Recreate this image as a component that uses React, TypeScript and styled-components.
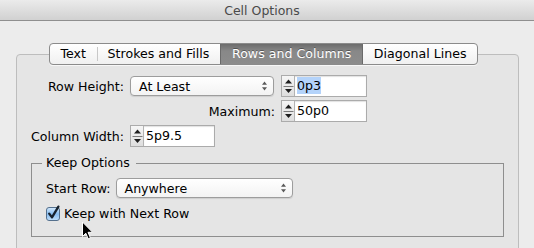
import React from 'react'
import styled, { createGlobalStyle } from 'styled-components'

const GlobalStyle = createGlobalStyle`
  html, body {
    margin: 0;
    padding: 0;
  }
  body {
    background: #ececec;
    font-family: 'DejaVu Sans', 'Liberation Sans', sans-serif;
    font-size: 12.6px;
    color: #000;
  }
`

const Window = styled.div`
  position: relative;
  width: 534px;
  height: 248px;
  overflow: hidden;
  display: flex;
  flex-direction: column;
  background: #ececec;
`

const TitleBar = styled.div`
  flex: none;
  height: 20px;
  display: flex;
  align-items: center;
  justify-content: center;
  padding-right: 10px;
  background: linear-gradient(#ebebeb, #d1d1d1);
  border-bottom: 1px solid #8f8f8f;
  color: #4a4a4a;
  font-size: 12.5px;
`

const Body = styled.div`
  flex: none;
  padding: 22px 15px 0 16px;
`

const TabRow = styled.div`
  position: relative;
  z-index: 1;
  display: flex;
  justify-content: center;
  padding-right: 8px;
  margin-bottom: -11px;
`

const TabGroup = styled.div`
  display: flex;
  height: 20px;
  border: 1px solid #8b8b8b;
  border-radius: 4px;
  overflow: hidden;
  background: linear-gradient(#ffffff, #f0f0f0);
  box-shadow: 0 1px 0 rgba(255, 255, 255, 0.7);
`

const Tab = styled.div<{ $active?: boolean; $divider?: boolean }>`
  position: relative;
  padding: 0 10.8px;
  line-height: 20px;
  white-space: nowrap;
  color: ${(p) => (p.$active ? '#fff' : '#000')};
  background: ${(p) =>
    p.$active ? 'linear-gradient(#6c6c6c, #888 35%, #8c8c8c)' : 'transparent'};
  text-shadow: ${(p) => (p.$active ? '0 -1px 0 rgba(0,0,0,0.35)' : 'none')};
  border-left: ${(p) => (p.$active ? '1px solid #6a6a6a' : 'none')};
  border-right: ${(p) => (p.$active ? '1px solid #6a6a6a' : 'none')};

  &::before {
    content: '';
    display: ${(p) => (p.$divider ? 'block' : 'none')};
    position: absolute;
    left: 0;
    top: 3px;
    bottom: 3px;
    width: 1px;
    background: #c8c8c8;
  }
`

const Pane = styled.div`
  height: 240px;
  border: 1px solid #bdbdbd;
  border-radius: 4px;
  background: #e5e5e5;
  padding: 20px 14px 0 14px;
`

const SizeGrid = styled.div`
  display: grid;
  grid-template-columns: 93px 145px 86px;
  column-gap: 6px;
  row-gap: 3px;
  grid-auto-rows: 22px;
  align-items: center;
`

const Label = styled.div<{ $col?: number }>`
  grid-column: ${(p) => p.$col ?? 1};
  justify-self: end;
  white-space: nowrap;
`

const PopUp = styled.div<{ $width: number }>`
  box-sizing: border-box;
  width: ${(p) => p.$width}px;
  height: 20px;
  display: flex;
  align-items: center;
  padding: 0 5px 0 8px;
  border: 1px solid #9d9d9d;
  border-radius: 4px;
  background: linear-gradient(#ffffff, #f3f3f3);
  box-shadow: 0 1px 1px rgba(0, 0, 0, 0.1);

  svg {
    margin-left: auto;
  }
`

const Stepper = styled.div<{ $width: number }>`
  box-sizing: border-box;
  width: ${(p) => p.$width}px;
  height: 22px;
  display: flex;
  border: 1px solid #ababab;
  background: #fff;
`

const SpinBox = styled.div`
  flex: none;
  width: 12px;
  display: flex;
  align-items: center;
  justify-content: center;
  border-right: 1px solid #b3b3b3;
  background: linear-gradient(#f6f6f6, #dedede);
`

const FieldText = styled.div`
  flex: 1;
  padding-left: 2px;
  line-height: 20px;
  box-shadow: inset 0 1px 1px rgba(0, 0, 0, 0.12);
`

const Selected = styled.span`
  background: #b4d3fa;
  padding: 1px 0;
`

const Group = styled.fieldset`
  margin: 9px 0 0;
  padding: 8px 14px 15px;
  border: 1px solid #8e8e8e;
  min-width: 0;
`

const Legend = styled.legend`
  margin-left: -4px;
  padding: 0 6px 0 4px;
  line-height: 14px;
`

const FormRow = styled.div<{ $gap: number; $top?: number }>`
  display: flex;
  align-items: center;
  gap: ${(p) => p.$gap}px;
  margin-top: ${(p) => p.$top ?? 0}px;
  min-height: 16px;
`

const Pointer = styled.svg`
  position: absolute;
  left: 81px;
  top: 221px;
`

const PopUpArrows = () => (
  <svg width="7" height="12" viewBox="0 0 7 12">
    <path d="M3.5 1.5 L6 4.8 H1 Z M3.5 10.5 L6 7.2 H1 Z" fill="#5a5a5a" />
  </svg>
)

const SpinArrows = () => (
  <svg width="11" height="20" viewBox="0 0 11 20">
    <path d="M5.5 3.5 L9 7.5 H2 Z" fill="#1e1e1e" />
    <path d="M0.5 10.5 H10.5" stroke="#7a7a7a" strokeWidth="1" />
    <path d="M5.5 17 L9 13 H2 Z" fill="#1e1e1e" />
  </svg>
)

const CheckBox = () => (
  <svg width="15" height="16" viewBox="0 0 15 16">
    <defs>
      <linearGradient id="cbFill" x1="0" y1="0" x2="0" y2="1">
        <stop offset="0" stopColor="#d6eafc" />
        <stop offset="0.5" stopColor="#86bcf0" />
        <stop offset="1" stopColor="#c2e0fb" />
      </linearGradient>
    </defs>
    <rect x="0.5" y="2.5" width="13" height="13" rx="2.5" fill="url(#cbFill)" stroke="#55708d" />
    <path
      d="M3.2 8.6 L6 12.4 L12.4 1.6"
      fill="none"
      stroke="#17222e"
      strokeWidth="2.3"
      strokeLinecap="round"
      strokeLinejoin="round"
    />
  </svg>
)

type Field = { value: string; selected?: boolean; width: number }

function NumberField({ value, selected, width }: Field) {
  return (
    <Stepper $width={width}>
      <SpinBox>
        <SpinArrows />
      </SpinBox>
      <FieldText>{selected ? <Selected>{value}</Selected> : value}</FieldText>
    </Stepper>
  )
}

const tabs = ['Text', 'Strokes and Fills', 'Rows and Columns', 'Diagonal Lines']
const activeTab = 2

export default function App() {
  return (
    <>
      <GlobalStyle />
      <Window>
        <TitleBar>Cell Options</TitleBar>
        <Body>
          <TabRow>
            <TabGroup>
              {tabs.map((name, i) => (
                <Tab
                  key={name}
                  $active={i === activeTab}
                  $divider={i > 0 && i !== activeTab && i - 1 !== activeTab}
                >
                  {name}
                </Tab>
              ))}
            </TabGroup>
          </TabRow>
          <Pane>
            <SizeGrid>
              <Label>Row Height:</Label>
              <PopUp $width={144}>
                At Least
                <PopUpArrows />
              </PopUp>
              <NumberField value="0p3" selected width={86} />

              <Label $col={2}>Maximum:</Label>
              <NumberField value="50p0" width={86} />

              <Label>Column Width:</Label>
              <NumberField value="5p9.5" width={85} />
            </SizeGrid>

            <Group>
              <Legend>Keep Options</Legend>
              <FormRow $gap={5}>
                Start Row:
                <PopUp $width={177}>
                  Anywhere
                  <PopUpArrows />
                </PopUp>
              </FormRow>
              <FormRow $gap={3} $top={7}>
                <CheckBox />
                Keep with Next Row
              </FormRow>
            </Group>
          </Pane>
        </Body>
        <Pointer width="13" height="19" viewBox="0 0 13 19">
          <path
            d="M1.5 1 V15.5 L4.8 12.2 L7.2 17.8 L9.4 16.8 L7 11.3 H11.6 Z"
            fill="#000"
            stroke="#fff"
            strokeWidth="1"
            strokeLinejoin="round"
          />
        </Pointer>
      </Window>
    </>
  )
}
